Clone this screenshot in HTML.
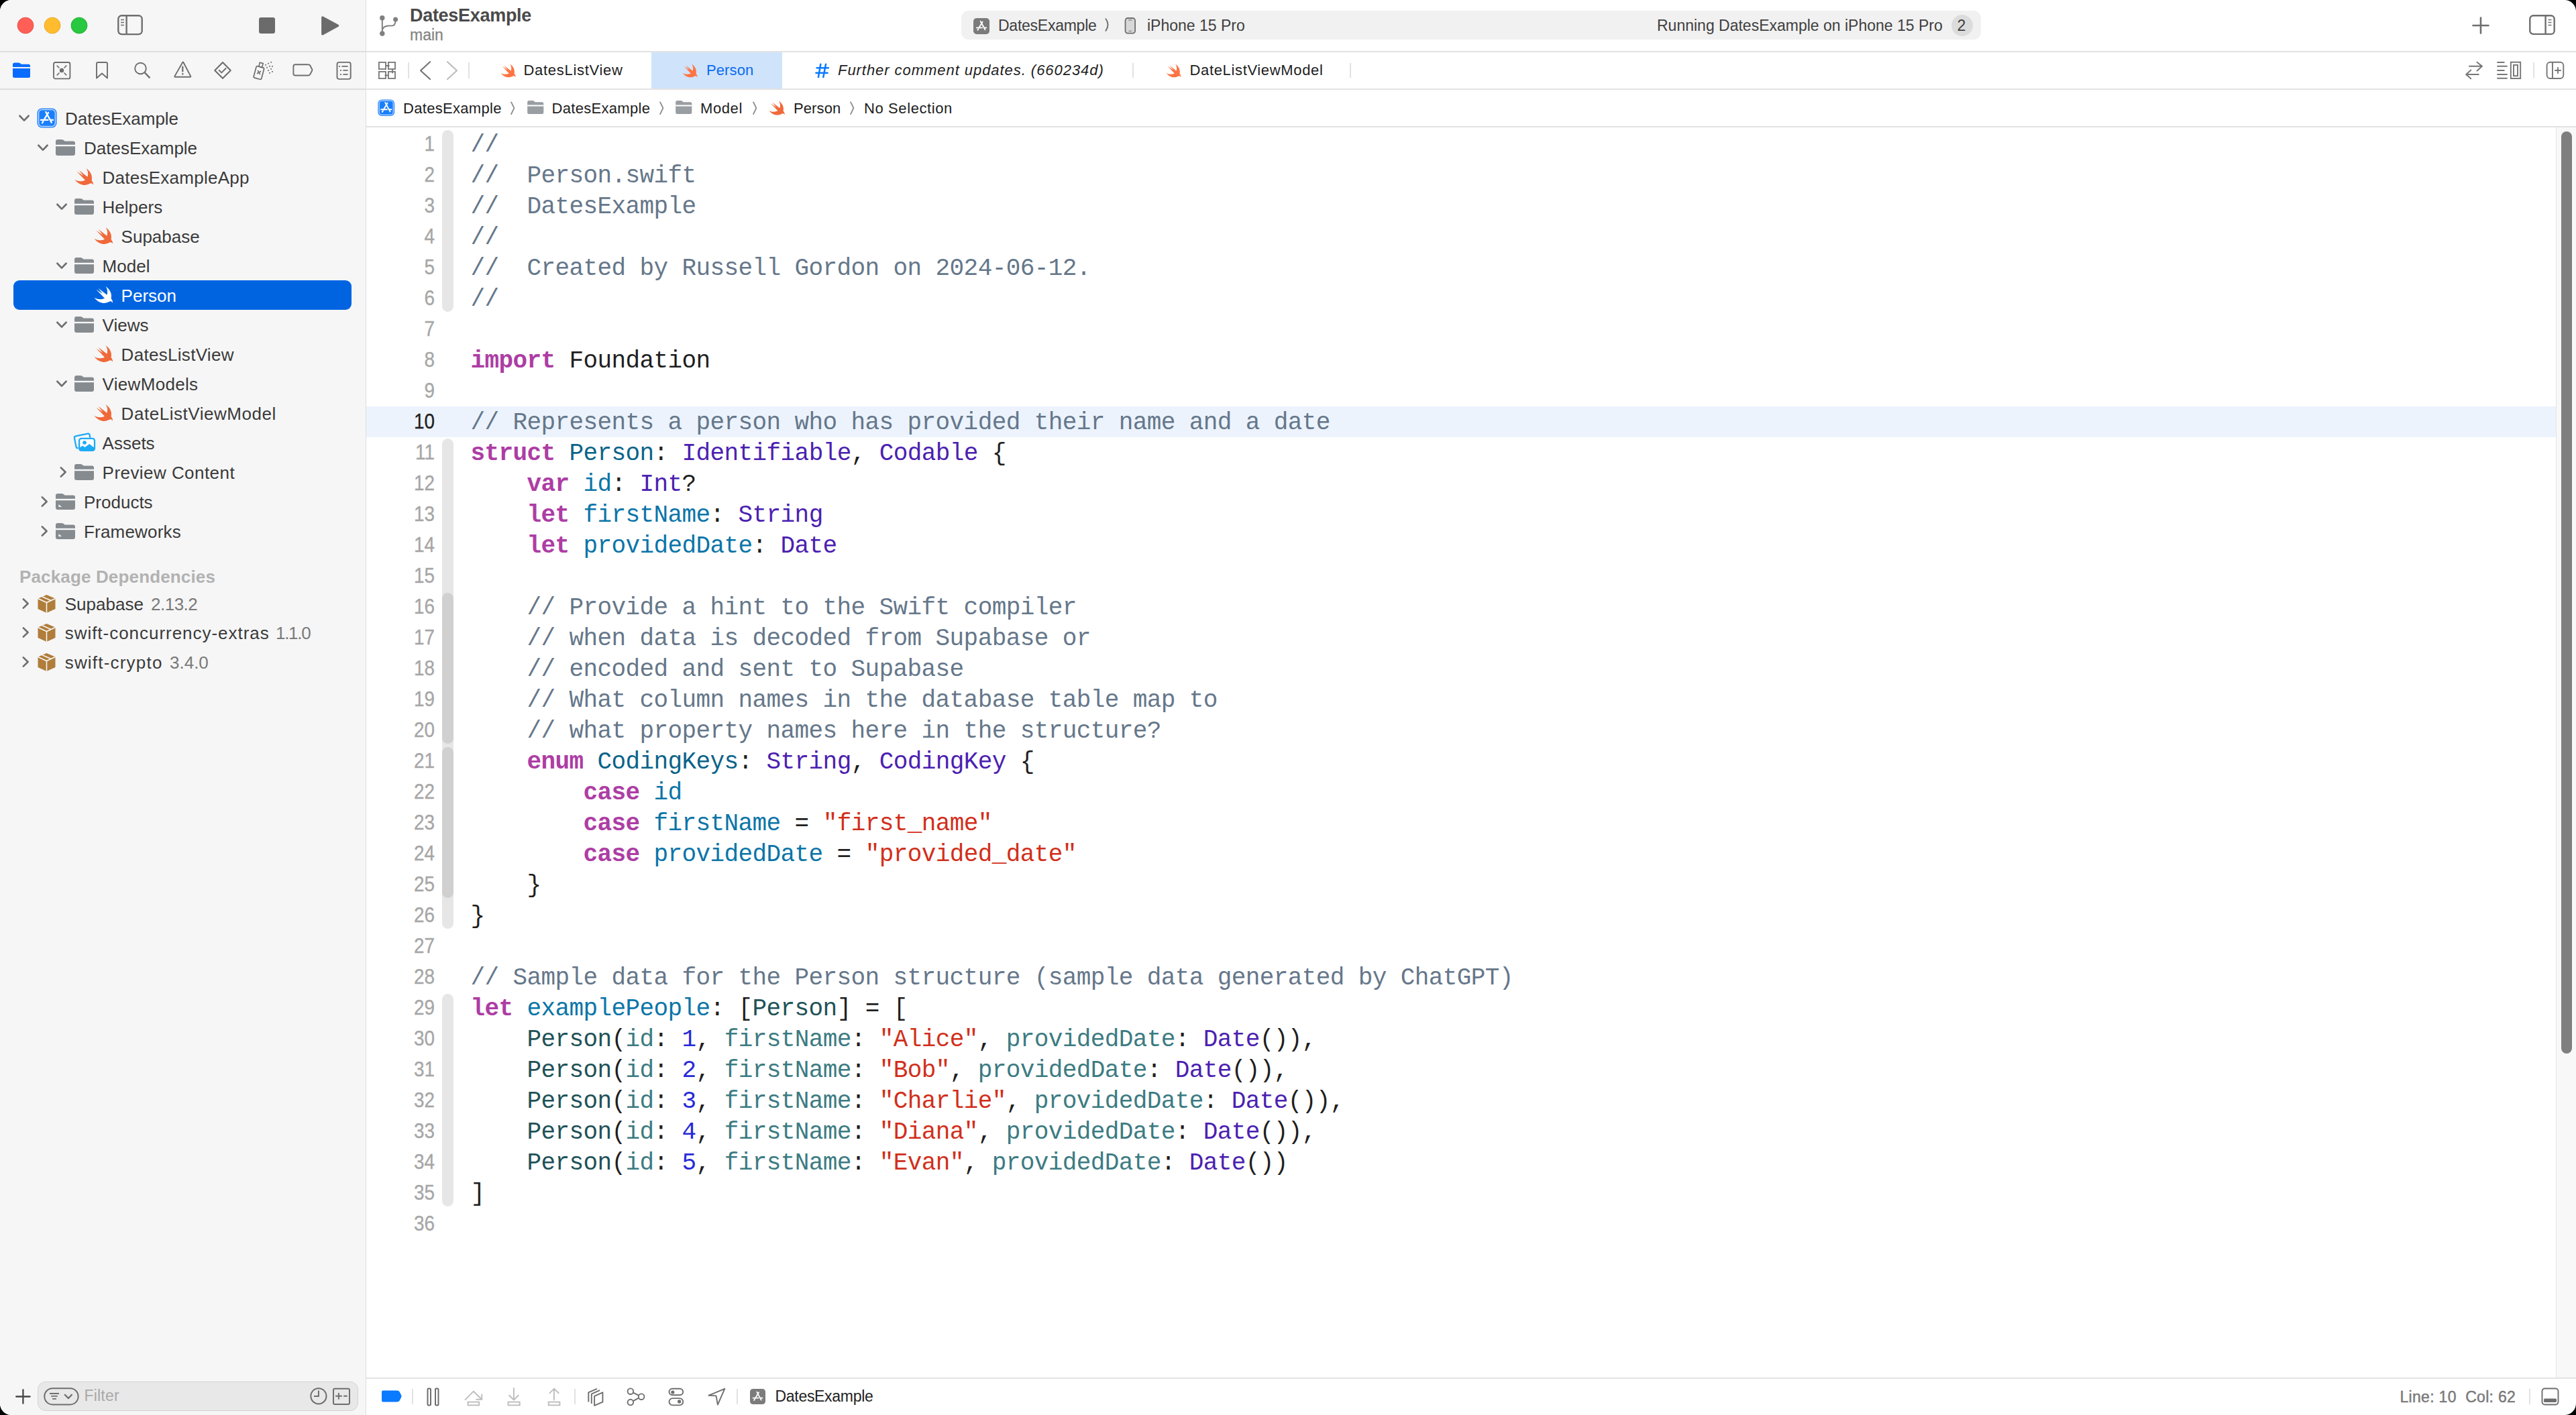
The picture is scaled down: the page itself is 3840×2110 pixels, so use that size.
<!DOCTYPE html><html><head><meta charset="utf-8"><style>
html,body{margin:0;padding:0;width:3840px;height:2110px;overflow:hidden;background:#000}
.t{position:absolute;white-space:pre}
#win{position:absolute;left:0;top:0;width:3840px;height:2110px;border-radius:17px;overflow:hidden;background:#fff}
svg{overflow:visible}
.cl{height:46px}
</style></head><body><div id="win">
<div style="position:absolute;left:0px;top:0px;width:545px;height:2110px;background:#f6f6f6"></div>
<div style="position:absolute;left:545px;top:0px;width:1px;height:2110px;background:#dedede"></div>
<div style="position:absolute;left:0px;top:76px;width:545px;height:2px;background:#dedede"></div>
<div style="position:absolute;left:0px;top:132px;width:545px;height:1.5px;background:#dedede"></div>
<svg style="position:absolute;left:25px;top:25px" width="26" height="26" viewBox="0 0 26 26"><circle cx="13" cy="13" r="12" fill="#ff5f57" stroke="#e24b41" stroke-width="0.8"/></svg>
<svg style="position:absolute;left:64.8px;top:25px" width="26" height="26" viewBox="0 0 26 26"><circle cx="13" cy="13" r="12" fill="#febc2e" stroke="#e1a325" stroke-width="0.8"/></svg>
<svg style="position:absolute;left:105px;top:25px" width="26" height="26" viewBox="0 0 26 26"><circle cx="13" cy="13" r="12" fill="#28c840" stroke="#1daa2c" stroke-width="0.8"/></svg>
<svg style="position:absolute;left:175px;top:22px" width="40" height="31" viewBox="0 0 40 31"><rect x="1.3" y="1.3" width="35.4" height="27.8" rx="5" fill="none" stroke="#6e6e6e" stroke-width="2.4"/><path d="M13.6 1.5 L13.6 29" stroke="#6e6e6e" stroke-width="2.4"/><path d="M5 7.5 H10 M5 11.5 H10 M5 15.5 H10" stroke="#6e6e6e" stroke-width="1.6"/></svg>
<div style="position:absolute;left:386px;top:26px;width:24px;height:24px;background:#6b6b6b;border-radius:3px"></div>
<svg style="position:absolute;left:478px;top:23px" width="30" height="31" viewBox="0 0 30 31"><path d="M2.8 3 L25.6 15.2 L2.8 27.8 Z" fill="#6b6b6b" stroke="#6b6b6b" stroke-width="3.4" stroke-linejoin="round"/></svg>
<svg style="position:absolute;left:19px;top:93px" width="27" height="24" viewBox="0 0 27 24"><path d="M0 3 Q0 0.5 3 0.5 L8.5 0.5 Q10.5 0.5 12 2 L12.8 2.8 L23.5 2.8 Q26 2.8 26 5.3 L26 20.5 Q26 23 23.5 23 L3 23 Q0 23 0 20.5 Z" fill="#0a6cff"/><rect x="0" y="7" width="26" height="2" fill="#f6f6f6"/></svg>
<svg style="position:absolute;left:79px;top:92px" width="27" height="27" viewBox="0 0 27 27"><rect x="1" y="1" width="24.4" height="24.4" rx="2.5" fill="none" stroke="#6e6e6e" stroke-width="1.9"/><circle cx="13" cy="13" r="3.2" fill="#6e6e6e"/><path d="M6.2 6.2 L9 9 M19.8 6.2 L17 9 M6.2 19.8 L9 17 M19.8 19.8 L17 17" stroke="#6e6e6e" stroke-width="1.7" stroke-linecap="round"/></svg>
<svg style="position:absolute;left:142px;top:92px" width="20" height="27" viewBox="0 0 20 27"><path d="M2 24.5 L2 3 Q2 1 4 1 L16 1 Q18 1 18 3 L18 24.5 L10 17.5 Z" fill="none" stroke="#6e6e6e" stroke-width="1.9" stroke-linejoin="round"/></svg>
<svg style="position:absolute;left:198px;top:91px" width="28" height="28" viewBox="0 0 28 28"><circle cx="11.5" cy="11" r="8.3" fill="none" stroke="#6e6e6e" stroke-width="1.9"/><path d="M17.5 17 L24.8 24.6" stroke="#6e6e6e" stroke-width="2.4" stroke-linecap="round"/></svg>
<svg style="position:absolute;left:259px;top:91px" width="27" height="27" viewBox="0 0 27 27"><path d="M13.2 2 Q13.8 1 14.4 2 L25.2 22.6 Q25.6 23.8 24.4 23.8 L2.2 23.8 Q1 23.8 1.4 22.6 Z" fill="none" stroke="#6e6e6e" stroke-width="1.9" stroke-linejoin="round"/><path d="M13.3 8.5 L13.3 15.5" stroke="#6e6e6e" stroke-width="2.2" stroke-linecap="round"/><circle cx="13.3" cy="19.3" r="1.3" fill="#6e6e6e"/></svg>
<svg style="position:absolute;left:318px;top:91px" width="28" height="28" viewBox="0 0 28 28"><path d="M14 2 L25.8 13.9 L14 25.8 L2.2 13.9 Z" fill="none" stroke="#6e6e6e" stroke-width="2.1" stroke-linejoin="round"/><path d="M8.6 13.8 L12.3 17.4 L18.6 11" fill="none" stroke="#6e6e6e" stroke-width="1.9" stroke-linecap="round" stroke-linejoin="round"/></svg>
<svg style="position:absolute;left:377px;top:91px" width="32" height="29" viewBox="0 0 32 29"><g transform="rotate(15 9 17)"><rect x="3" y="8.5" width="12" height="18" rx="2" fill="none" stroke="#6e6e6e" stroke-width="1.7"/><rect x="6.5" y="2.5" width="5" height="6" fill="none" stroke="#6e6e6e" stroke-width="1.6"/><path d="M6.5 14.5 L11.5 19.5 M11.5 14.5 L6.5 19.5" stroke="#6e6e6e" stroke-width="1.6"/></g><rect x="18.200000000000003" y="4.8999999999999995" width="1.8" height="1.8" fill="#6e6e6e"/><rect x="22.1" y="2.8000000000000003" width="1.8" height="1.8" fill="#6e6e6e"/><rect x="26.200000000000003" y="0.9" width="1.8" height="1.8" fill="#6e6e6e"/><rect x="20.1" y="8.799999999999999" width="1.8" height="1.8" fill="#6e6e6e"/><rect x="24.200000000000003" y="6.8999999999999995" width="1.8" height="1.8" fill="#6e6e6e"/><rect x="28.1" y="7.0" width="1.8" height="1.8" fill="#6e6e6e"/><rect x="26.200000000000003" y="10.9" width="1.8" height="1.8" fill="#6e6e6e"/><rect x="22.1" y="13.0" width="1.8" height="1.8" fill="#6e6e6e"/><rect x="28.1" y="14.9" width="1.8" height="1.8" fill="#6e6e6e"/><rect x="24.200000000000003" y="16.900000000000002" width="1.8" height="1.8" fill="#6e6e6e"/></svg>
<svg style="position:absolute;left:436px;top:95px" width="32" height="20" viewBox="0 0 32 20"><path d="M4 1.2 L23.5 1.2 Q25.3 1.2 26.2 2.6 L29.2 8.4 Q29.8 9.3 29.2 10.2 L26.2 16 Q25.3 17.5 23.5 17.5 L4 17.5 Q1.4 17.5 1.4 15 L1.4 3.8 Q1.4 1.2 4 1.2 Z" fill="none" stroke="#6e6e6e" stroke-width="1.9"/></svg>
<svg style="position:absolute;left:501px;top:91px" width="24" height="28" viewBox="0 0 24 28"><rect x="1.5" y="1.9" width="20.2" height="25" rx="2.8" fill="none" stroke="#6e6e6e" stroke-width="1.9"/><path d="M8.4 7.9 H17.6 M10.4 13.9 H17.6 M10.4 19.9 H17.6" stroke="#6e6e6e" stroke-width="1.9"/><rect x="4" y="7" width="1.9" height="1.9" fill="#6e6e6e"/><rect x="6" y="13" width="1.9" height="1.9" fill="#6e6e6e"/><rect x="6" y="19" width="1.9" height="1.9" fill="#6e6e6e"/></svg>
<div style="position:absolute;left:20px;top:418px;width:504px;height:44px;background:#0064e1;border-radius:9px"></div>
<svg style="position:absolute;left:27px;top:171px" width="18" height="12" viewBox="0 0 18 12"><path d="M2.4 1.8 L9 8.6 L15.6 1.8" fill="none" stroke="#6f6f6f" stroke-width="2.7" stroke-linecap="round" stroke-linejoin="round"/></svg>
<svg style="position:absolute;left:54.5px;top:161px" width="30" height="30" viewBox="0 0 30 30"><rect x="0.5" y="0.5" width="29" height="29" rx="7" fill="#1a7ffc"/><rect x="2.6" y="2.6" width="24.8" height="24.8" rx="5" fill="none" stroke="#bcd8fe" stroke-width="1.5"/><g fill="none" stroke="#fff" stroke-width="2.3" stroke-linecap="round"><path d="M17.1 6.9 L10.3 18.1"/><path d="M13.3 6.0 L21.8 21.6"/><path d="M5.9 17.9 H16.4 M20.3 17.9 H24.1"/><path d="M9.3 20.2 L8.0 22.2"/></g></svg>
<div class="t" style="left:97.0px;top:164.0px;font-size:26px;line-height:26px;color:#3a3a3a;font-weight:normal;font-style:normal;font-family:'Liberation Sans', sans-serif;letter-spacing:0px;">DatesExample</div>
<svg style="position:absolute;left:55px;top:215px" width="18" height="12" viewBox="0 0 18 12"><path d="M2.4 1.8 L9 8.6 L15.6 1.8" fill="none" stroke="#6f6f6f" stroke-width="2.7" stroke-linecap="round" stroke-linejoin="round"/></svg>
<svg style="position:absolute;left:83.0px;top:208px" width="29" height="24" viewBox="0 0 29 24"><path d="M0 3 Q0 0 3 0 L9 0 Q11 0 12.5 1.6 L13.5 2.6 L26 2.6 Q29 2.6 29 5.6 L29 21 Q29 24 26 24 L3 24 Q0 24 0 21 Z" fill="#868b90"/><rect x="0" y="7.8" width="29" height="2.4" fill="#f6f6f6"/></svg>
<div class="t" style="left:125.0px;top:208.0px;font-size:26px;line-height:26px;color:#3a3a3a;font-weight:normal;font-style:normal;font-family:'Liberation Sans', sans-serif;letter-spacing:0px;">DatesExample</div>
<svg style="position:absolute;left:111.0px;top:251px" width="29" height="25" viewBox="0 0 29 25"><path d="M0.42 16.5 C4.5 19.6 10 20.2 15.97 17.67 L3.25 4.38 L13.15 11.17 L6.64 2.69 L19.37 12.86 C20.9 8.5 20.2 3.8 17.67 0.14 C23.2 3.6 27.4 10.5 25.59 17.95 C27 19.8 28.3 22.2 28.13 24.46 C26.6 22.6 25.1 22.0 23.6 22.5 C20 24.3 17 25.2 13.7 24.9 C8.6 24.5 3.6 21.2 0.42 16.5 Z" fill="#f0693a"/></svg>
<div class="t" style="left:152.6px;top:252.0px;font-size:26px;line-height:26px;color:#3a3a3a;font-weight:normal;font-style:normal;font-family:'Liberation Sans', sans-serif;letter-spacing:0.25px;">DatesExampleApp</div>
<svg style="position:absolute;left:83px;top:303px" width="18" height="12" viewBox="0 0 18 12"><path d="M2.4 1.8 L9 8.6 L15.6 1.8" fill="none" stroke="#6f6f6f" stroke-width="2.7" stroke-linecap="round" stroke-linejoin="round"/></svg>
<svg style="position:absolute;left:111.3px;top:296px" width="29" height="24" viewBox="0 0 29 24"><path d="M0 3 Q0 0 3 0 L9 0 Q11 0 12.5 1.6 L13.5 2.6 L26 2.6 Q29 2.6 29 5.6 L29 21 Q29 24 26 24 L3 24 Q0 24 0 21 Z" fill="#868b90"/><rect x="0" y="7.8" width="29" height="2.4" fill="#f6f6f6"/></svg>
<div class="t" style="left:152.6px;top:296.0px;font-size:26px;line-height:26px;color:#3a3a3a;font-weight:normal;font-style:normal;font-family:'Liberation Sans', sans-serif;letter-spacing:0px;">Helpers</div>
<svg style="position:absolute;left:139.7px;top:339px" width="29" height="25" viewBox="0 0 29 25"><path d="M0.42 16.5 C4.5 19.6 10 20.2 15.97 17.67 L3.25 4.38 L13.15 11.17 L6.64 2.69 L19.37 12.86 C20.9 8.5 20.2 3.8 17.67 0.14 C23.2 3.6 27.4 10.5 25.59 17.95 C27 19.8 28.3 22.2 28.13 24.46 C26.6 22.6 25.1 22.0 23.6 22.5 C20 24.3 17 25.2 13.7 24.9 C8.6 24.5 3.6 21.2 0.42 16.5 Z" fill="#f0693a"/></svg>
<div class="t" style="left:180.6px;top:340.0px;font-size:26px;line-height:26px;color:#3a3a3a;font-weight:normal;font-style:normal;font-family:'Liberation Sans', sans-serif;letter-spacing:0px;">Supabase</div>
<svg style="position:absolute;left:83px;top:391px" width="18" height="12" viewBox="0 0 18 12"><path d="M2.4 1.8 L9 8.6 L15.6 1.8" fill="none" stroke="#6f6f6f" stroke-width="2.7" stroke-linecap="round" stroke-linejoin="round"/></svg>
<svg style="position:absolute;left:111.3px;top:384px" width="29" height="24" viewBox="0 0 29 24"><path d="M0 3 Q0 0 3 0 L9 0 Q11 0 12.5 1.6 L13.5 2.6 L26 2.6 Q29 2.6 29 5.6 L29 21 Q29 24 26 24 L3 24 Q0 24 0 21 Z" fill="#868b90"/><rect x="0" y="7.8" width="29" height="2.4" fill="#f6f6f6"/></svg>
<div class="t" style="left:152.6px;top:384.0px;font-size:26px;line-height:26px;color:#3a3a3a;font-weight:normal;font-style:normal;font-family:'Liberation Sans', sans-serif;letter-spacing:0px;">Model</div>
<svg style="position:absolute;left:139.7px;top:427px" width="29" height="25" viewBox="0 0 29 25"><path d="M0.42 16.5 C4.5 19.6 10 20.2 15.97 17.67 L3.25 4.38 L13.15 11.17 L6.64 2.69 L19.37 12.86 C20.9 8.5 20.2 3.8 17.67 0.14 C23.2 3.6 27.4 10.5 25.59 17.95 C27 19.8 28.3 22.2 28.13 24.46 C26.6 22.6 25.1 22.0 23.6 22.5 C20 24.3 17 25.2 13.7 24.9 C8.6 24.5 3.6 21.2 0.42 16.5 Z" fill="#ffffff"/></svg>
<div class="t" style="left:180.6px;top:428.0px;font-size:26px;line-height:26px;color:#ffffff;font-weight:normal;font-style:normal;font-family:'Liberation Sans', sans-serif;letter-spacing:0px;">Person</div>
<svg style="position:absolute;left:83px;top:479px" width="18" height="12" viewBox="0 0 18 12"><path d="M2.4 1.8 L9 8.6 L15.6 1.8" fill="none" stroke="#6f6f6f" stroke-width="2.7" stroke-linecap="round" stroke-linejoin="round"/></svg>
<svg style="position:absolute;left:111.3px;top:472px" width="29" height="24" viewBox="0 0 29 24"><path d="M0 3 Q0 0 3 0 L9 0 Q11 0 12.5 1.6 L13.5 2.6 L26 2.6 Q29 2.6 29 5.6 L29 21 Q29 24 26 24 L3 24 Q0 24 0 21 Z" fill="#868b90"/><rect x="0" y="7.8" width="29" height="2.4" fill="#f6f6f6"/></svg>
<div class="t" style="left:152.6px;top:472.0px;font-size:26px;line-height:26px;color:#3a3a3a;font-weight:normal;font-style:normal;font-family:'Liberation Sans', sans-serif;letter-spacing:0px;">Views</div>
<svg style="position:absolute;left:139.7px;top:515px" width="29" height="25" viewBox="0 0 29 25"><path d="M0.42 16.5 C4.5 19.6 10 20.2 15.97 17.67 L3.25 4.38 L13.15 11.17 L6.64 2.69 L19.37 12.86 C20.9 8.5 20.2 3.8 17.67 0.14 C23.2 3.6 27.4 10.5 25.59 17.95 C27 19.8 28.3 22.2 28.13 24.46 C26.6 22.6 25.1 22.0 23.6 22.5 C20 24.3 17 25.2 13.7 24.9 C8.6 24.5 3.6 21.2 0.42 16.5 Z" fill="#f0693a"/></svg>
<div class="t" style="left:180.6px;top:516.0px;font-size:26px;line-height:26px;color:#3a3a3a;font-weight:normal;font-style:normal;font-family:'Liberation Sans', sans-serif;letter-spacing:0.3px;">DatesListView</div>
<svg style="position:absolute;left:83px;top:567px" width="18" height="12" viewBox="0 0 18 12"><path d="M2.4 1.8 L9 8.6 L15.6 1.8" fill="none" stroke="#6f6f6f" stroke-width="2.7" stroke-linecap="round" stroke-linejoin="round"/></svg>
<svg style="position:absolute;left:111.3px;top:560px" width="29" height="24" viewBox="0 0 29 24"><path d="M0 3 Q0 0 3 0 L9 0 Q11 0 12.5 1.6 L13.5 2.6 L26 2.6 Q29 2.6 29 5.6 L29 21 Q29 24 26 24 L3 24 Q0 24 0 21 Z" fill="#868b90"/><rect x="0" y="7.8" width="29" height="2.4" fill="#f6f6f6"/></svg>
<div class="t" style="left:152.6px;top:560.0px;font-size:26px;line-height:26px;color:#3a3a3a;font-weight:normal;font-style:normal;font-family:'Liberation Sans', sans-serif;letter-spacing:0.3px;">ViewModels</div>
<svg style="position:absolute;left:139.7px;top:603px" width="29" height="25" viewBox="0 0 29 25"><path d="M0.42 16.5 C4.5 19.6 10 20.2 15.97 17.67 L3.25 4.38 L13.15 11.17 L6.64 2.69 L19.37 12.86 C20.9 8.5 20.2 3.8 17.67 0.14 C23.2 3.6 27.4 10.5 25.59 17.95 C27 19.8 28.3 22.2 28.13 24.46 C26.6 22.6 25.1 22.0 23.6 22.5 C20 24.3 17 25.2 13.7 24.9 C8.6 24.5 3.6 21.2 0.42 16.5 Z" fill="#f0693a"/></svg>
<div class="t" style="left:180.6px;top:604.0px;font-size:26px;line-height:26px;color:#3a3a3a;font-weight:normal;font-style:normal;font-family:'Liberation Sans', sans-serif;letter-spacing:0.54px;">DateListViewModel</div>
<svg style="position:absolute;left:100px;top:640px" width="50" height="40" viewBox="0 0 50 40"><path d="M16.5 27.8 L15.8 28 Q13.9 28.2 13.5 26.2 L10.9 12.9 Q10.5 10.7 12.7 10.3 L31 6.6 Q33.2 6.3 33.6 8.5 L34.3 12.6" fill="none" stroke="#1eabf6" stroke-width="2.3" stroke-linejoin="round"/><rect x="18.1" y="13.8" width="22.9" height="18" rx="3.2" fill="#fff" stroke="#1eabf6" stroke-width="2.3"/><path d="M19 27.3 L23.3 24.4 L26.5 26.9 L33.2 22.1 L40 27.3 L40 31 L19 31 Z" fill="#1eabf6"/><circle cx="26" cy="20" r="2.8" fill="#1eabf6"/></svg>
<div class="t" style="left:152.6px;top:648.0px;font-size:26px;line-height:26px;color:#3a3a3a;font-weight:normal;font-style:normal;font-family:'Liberation Sans', sans-serif;letter-spacing:0px;">Assets</div>
<svg style="position:absolute;left:89px;top:695px" width="12" height="18" viewBox="0 0 12 18"><path d="M1.8 2.4 L8.6 9 L1.8 15.6" fill="none" stroke="#6f6f6f" stroke-width="2.7" stroke-linecap="round" stroke-linejoin="round"/></svg>
<svg style="position:absolute;left:111.3px;top:692px" width="29" height="24" viewBox="0 0 29 24"><path d="M0 3 Q0 0 3 0 L9 0 Q11 0 12.5 1.6 L13.5 2.6 L26 2.6 Q29 2.6 29 5.6 L29 21 Q29 24 26 24 L3 24 Q0 24 0 21 Z" fill="#868b90"/><rect x="0" y="7.8" width="29" height="2.4" fill="#f6f6f6"/></svg>
<div class="t" style="left:152.6px;top:692.0px;font-size:26px;line-height:26px;color:#3a3a3a;font-weight:normal;font-style:normal;font-family:'Liberation Sans', sans-serif;letter-spacing:0.45px;">Preview Content</div>
<svg style="position:absolute;left:61px;top:739px" width="12" height="18" viewBox="0 0 12 18"><path d="M1.8 2.4 L8.6 9 L1.8 15.6" fill="none" stroke="#6f6f6f" stroke-width="2.7" stroke-linecap="round" stroke-linejoin="round"/></svg>
<svg style="position:absolute;left:83.0px;top:736px" width="29" height="24" viewBox="0 0 29 24"><path d="M0 3 Q0 0 3 0 L9 0 Q11 0 12.5 1.6 L13.5 2.6 L26 2.6 Q29 2.6 29 5.6 L29 21 Q29 24 26 24 L3 24 Q0 24 0 21 Z" fill="#868b90"/><rect x="0" y="7.8" width="29" height="2.4" fill="#f6f6f6"/><path d="M4.5 16 L4.5 20 L9 20 Z" fill="#f6f6f6"/></svg>
<div class="t" style="left:125.0px;top:736.0px;font-size:26px;line-height:26px;color:#3a3a3a;font-weight:normal;font-style:normal;font-family:'Liberation Sans', sans-serif;letter-spacing:0px;">Products</div>
<svg style="position:absolute;left:61px;top:783px" width="12" height="18" viewBox="0 0 12 18"><path d="M1.8 2.4 L8.6 9 L1.8 15.6" fill="none" stroke="#6f6f6f" stroke-width="2.7" stroke-linecap="round" stroke-linejoin="round"/></svg>
<svg style="position:absolute;left:83.0px;top:780px" width="29" height="24" viewBox="0 0 29 24"><path d="M0 3 Q0 0 3 0 L9 0 Q11 0 12.5 1.6 L13.5 2.6 L26 2.6 Q29 2.6 29 5.6 L29 21 Q29 24 26 24 L3 24 Q0 24 0 21 Z" fill="#868b90"/><rect x="0" y="7.8" width="29" height="2.4" fill="#f6f6f6"/><path d="M4.5 16 L4.5 20 L9 20 Z" fill="#f6f6f6"/></svg>
<div class="t" style="left:125.0px;top:780.0px;font-size:26px;line-height:26px;color:#3a3a3a;font-weight:normal;font-style:normal;font-family:'Liberation Sans', sans-serif;letter-spacing:0.2px;">Frameworks</div>
<div class="t" style="left:29.0px;top:846.7px;font-size:26px;line-height:26px;color:#b2b2b2;font-weight:bold;font-style:normal;font-family:'Liberation Sans', sans-serif;letter-spacing:0.15px;">Package Dependencies</div>
<svg style="position:absolute;left:33px;top:891.0px" width="12" height="18" viewBox="0 0 12 18"><path d="M1.8 2.4 L8.6 9 L1.8 15.6" fill="none" stroke="#6f6f6f" stroke-width="2.7" stroke-linecap="round" stroke-linejoin="round"/></svg>
<svg style="position:absolute;left:56px;top:886.0px" width="28" height="29" viewBox="0 0 28 29"><path d="M13.5 1 L26.5 6.5 L26.5 22 L13.5 28 L0.5 22 L0.5 6.5 Z" fill="#b07d3a"/><path d="M0.5 6.5 L13.5 12.5 L26.5 6.5 M13.5 12.5 L13.5 28" fill="none" stroke="#f6f6f6" stroke-width="1.6"/><path d="M6.5 3.5 L20 9.5" stroke="#f6f6f6" stroke-width="1.6"/></svg>
<div class="t" style="left:96.7px;top:888.0px;font-size:26px;line-height:26px;color:#3a3a3a;font-weight:normal;font-style:normal;font-family:'Liberation Sans', sans-serif;letter-spacing:0.03px;">Supabase</div>
<div class="t" style="left:225.0px;top:888.0px;font-size:26px;line-height:26px;color:#7a7a7a;font-weight:normal;font-style:normal;font-family:'Liberation Sans', sans-serif;letter-spacing:-0.5px;">2.13.2</div>
<svg style="position:absolute;left:33px;top:934.4px" width="12" height="18" viewBox="0 0 12 18"><path d="M1.8 2.4 L8.6 9 L1.8 15.6" fill="none" stroke="#6f6f6f" stroke-width="2.7" stroke-linecap="round" stroke-linejoin="round"/></svg>
<svg style="position:absolute;left:56px;top:929.4px" width="28" height="29" viewBox="0 0 28 29"><path d="M13.5 1 L26.5 6.5 L26.5 22 L13.5 28 L0.5 22 L0.5 6.5 Z" fill="#b07d3a"/><path d="M0.5 6.5 L13.5 12.5 L26.5 6.5 M13.5 12.5 L13.5 28" fill="none" stroke="#f6f6f6" stroke-width="1.6"/><path d="M6.5 3.5 L20 9.5" stroke="#f6f6f6" stroke-width="1.6"/></svg>
<div class="t" style="left:96.7px;top:931.4px;font-size:26px;line-height:26px;color:#3a3a3a;font-weight:normal;font-style:normal;font-family:'Liberation Sans', sans-serif;letter-spacing:0.97px;">swift-concurrency-extras</div>
<div class="t" style="left:411.0px;top:931.4px;font-size:26px;line-height:26px;color:#7a7a7a;font-weight:normal;font-style:normal;font-family:'Liberation Sans', sans-serif;letter-spacing:-1.3px;">1.1.0</div>
<svg style="position:absolute;left:33px;top:977.8px" width="12" height="18" viewBox="0 0 12 18"><path d="M1.8 2.4 L8.6 9 L1.8 15.6" fill="none" stroke="#6f6f6f" stroke-width="2.7" stroke-linecap="round" stroke-linejoin="round"/></svg>
<svg style="position:absolute;left:56px;top:972.8px" width="28" height="29" viewBox="0 0 28 29"><path d="M13.5 1 L26.5 6.5 L26.5 22 L13.5 28 L0.5 22 L0.5 6.5 Z" fill="#b07d3a"/><path d="M0.5 6.5 L13.5 12.5 L26.5 6.5 M13.5 12.5 L13.5 28" fill="none" stroke="#f6f6f6" stroke-width="1.6"/><path d="M6.5 3.5 L20 9.5" stroke="#f6f6f6" stroke-width="1.6"/></svg>
<div class="t" style="left:96.7px;top:974.8px;font-size:26px;line-height:26px;color:#3a3a3a;font-weight:normal;font-style:normal;font-family:'Liberation Sans', sans-serif;letter-spacing:1.2px;">swift-crypto</div>
<div class="t" style="left:253.0px;top:974.8px;font-size:26px;line-height:26px;color:#7a7a7a;font-weight:normal;font-style:normal;font-family:'Liberation Sans', sans-serif;letter-spacing:0px;">3.4.0</div>
<svg style="position:absolute;left:22px;top:2070px" width="26" height="26" viewBox="0 0 26 26"><path d="M12.4 2.3 V22.7 M2.2 12.5 H22.6" stroke="#454545" stroke-width="2.3" stroke-linecap="round"/></svg>
<div style="position:absolute;left:56.3px;top:2060.3px;width:477.5px;height:43.6px;background:#e8e8e8;border:1px solid #d3d3d3;border-radius:12px;box-sizing:border-box"></div>
<svg style="position:absolute;left:64px;top:2068px" width="54" height="28" viewBox="0 0 54 28"><rect x="2.3" y="2.3" width="50.3" height="24.1" rx="12" fill="none" stroke="#6e6e6e" stroke-width="2"/><path d="M10 10 H24 M12.2 13.8 H21.8 M14 17.9 H20" stroke="#6e6e6e" stroke-width="1.8"/><path d="M32.7 11.8 L38 17.1 L43 11.8" fill="none" stroke="#6e6e6e" stroke-width="2.2" stroke-linecap="round" stroke-linejoin="round"/></svg>
<div class="t" style="left:125.5px;top:2069.5px;font-size:23px;line-height:23px;color:#a8a8a8;font-weight:normal;font-style:normal;font-family:'Liberation Sans', sans-serif;letter-spacing:0.2px;">Filter</div>
<svg style="position:absolute;left:461px;top:2068px" width="28" height="28" viewBox="0 0 28 28"><circle cx="13.9" cy="13.8" r="11.6" fill="none" stroke="#6e6e6e" stroke-width="2"/><path d="M13.9 5.6 V13.9 H7" fill="none" stroke="#6e6e6e" stroke-width="2"/></svg>
<svg style="position:absolute;left:495px;top:2069px" width="28" height="27" viewBox="0 0 28 27"><rect x="2" y="1.8" width="24" height="23.3" rx="2" fill="none" stroke="#6e6e6e" stroke-width="2"/><path d="M5 12.8 H14.8 M9.9 7.9 V17.7 M17.2 12.8 H22.8" stroke="#6e6e6e" stroke-width="1.9"/></svg>
<div style="position:absolute;left:546px;top:76px;width:3294px;height:2px;background:#e3e3e3"></div>
<div style="position:absolute;left:546px;top:132px;width:3294px;height:1.5px;background:#e3e3e3"></div>
<div style="position:absolute;left:546px;top:188px;width:3294px;height:1.5px;background:#e3e3e3"></div>
<div style="position:absolute;left:546px;top:2054px;width:3294px;height:1.5px;background:#e3e3e3"></div>
<svg style="position:absolute;left:560px;top:18px" width="36" height="40" viewBox="0 0 36 40"><circle cx="9.8" cy="8.7" r="3.7" fill="#808080"/><circle cx="29.6" cy="11.1" r="3.5" fill="#808080"/><circle cx="9.8" cy="32" r="3.7" fill="#808080"/><path d="M9.8 9 V31" stroke="#808080" stroke-width="2"/><path d="M9.8 27 Q11 21.5 18 20.6 L25 20.2 Q29.6 19.8 29.6 12" fill="none" stroke="#808080" stroke-width="2"/></svg>
<div class="t" style="left:611.0px;top:10.1px;font-size:27px;line-height:27px;color:#4a4a4a;font-weight:bold;font-style:normal;font-family:'Liberation Sans', sans-serif;letter-spacing:-0.3px;">DatesExample</div>
<div class="t" style="left:611.0px;top:40.5px;font-size:23px;line-height:23px;color:#858585;font-weight:normal;font-style:normal;font-family:'Liberation Sans', sans-serif;letter-spacing:0px;-webkit-text-stroke:0.3px #858585">main</div>
<div style="position:absolute;left:1433px;top:16.3px;width:1520px;height:43px;background:#f1f1f1;border-radius:11px"></div>
<svg style="position:absolute;left:1451px;top:26.5px" width="24" height="24" viewBox="0 0 30 30"><rect x="0" y="0" width="30" height="30" rx="6" fill="#7b7b7b"/><g fill="none" stroke="#fff" stroke-width="2.3" stroke-linecap="round"><path d="M17.1 6.9 L10.3 18.1"/><path d="M13.3 6.0 L21.8 21.6"/><path d="M5.9 17.9 H16.4 M20.3 17.9 H24.1"/><path d="M9.3 20.2 L8.0 22.2"/></g></svg>
<div class="t" style="left:1488.0px;top:26.5px;font-size:23px;line-height:23px;color:#404040;font-weight:normal;font-style:normal;font-family:'Liberation Sans', sans-serif;letter-spacing:-0.25px;">DatesExample</div>
<svg style="position:absolute;left:1646px;top:26px" width="10" height="23" viewBox="0 0 10 23"><path d="M2 1.5 Q9 10.5 2 20.5" fill="none" stroke="#6e6e6e" stroke-width="1.9"/></svg>
<svg style="position:absolute;left:1676px;top:26px" width="18" height="25" viewBox="0 0 18 25"><rect x="1.5" y="1" width="14.6" height="22.6" rx="3.5" fill="#d8d8d8" stroke="#6e6e6e" stroke-width="1.8"/><path d="M6 4 H11.5 M6.5 20.2 H11" stroke="#6e6e6e" stroke-width="1.1"/></svg>
<div class="t" style="left:1710.0px;top:26.5px;font-size:23px;line-height:23px;color:#404040;font-weight:normal;font-style:normal;font-family:'Liberation Sans', sans-serif;letter-spacing:0px;">iPhone 15 Pro</div>
<div class="t" style="left:2470.0px;top:26.5px;font-size:23px;line-height:23px;color:#404040;font-weight:normal;font-style:normal;font-family:'Liberation Sans', sans-serif;letter-spacing:0px;">Running DatesExample on iPhone 15 Pro</div>
<svg style="position:absolute;left:2909px;top:21.5px" width="32" height="32" viewBox="0 0 32 32"><circle cx="16" cy="16" r="16" fill="#dcdcdc"/></svg>
<div class="t" style="left:2917.5px;top:26.5px;font-size:23px;line-height:23px;color:#404040;font-weight:normal;font-style:normal;font-family:'Liberation Sans', sans-serif;letter-spacing:0px;">2</div>
<svg style="position:absolute;left:3685px;top:25px" width="26" height="26" viewBox="0 0 26 26"><path d="M13 1.5 V24.5 M1.5 13 H24.5" stroke="#6e6e6e" stroke-width="2.6" stroke-linecap="round"/></svg>
<svg style="position:absolute;left:3770px;top:22px" width="40" height="31" viewBox="0 0 40 31"><rect x="1.3" y="1.3" width="36.4" height="27.6" rx="5" fill="none" stroke="#6e6e6e" stroke-width="2.4"/><path d="M24.6 1.5 L24.6 29" stroke="#6e6e6e" stroke-width="2.4"/><path d="M28.5 7.5 H33.5 M28.5 11.5 H33.5 M28.5 15.5 H33.5" stroke="#6e6e6e" stroke-width="1.6"/></svg>
<svg style="position:absolute;left:563px;top:91px" width="29" height="29" viewBox="0 0 29 29"><g fill="none" stroke="#767676" stroke-width="1.8"><rect x="1.9" y="1.9" width="10.1" height="10.1"/><rect x="15.9" y="1.9" width="10.1" height="10.1"/><rect x="1.9" y="15.9" width="10.1" height="10.1"/><rect x="15.9" y="15.9" width="10.1" height="10.1"/><path d="M12 7 H17.6 M22 12 V18.3 M16.5 21.3 H10.5"/></g></svg>
<div style="position:absolute;left:608px;top:93px;width:2px;height:24px;background:#e2e2e2"></div>
<svg style="position:absolute;left:624px;top:90px" width="20" height="30" viewBox="0 0 20 30"><path d="M17 2.2 L3 15.2 L17 28" fill="none" stroke="#767676" stroke-width="2.2" stroke-linecap="round" stroke-linejoin="round"/></svg>
<svg style="position:absolute;left:664px;top:90px" width="20" height="30" viewBox="0 0 20 30"><path d="M3 2.2 L17 15.2 L3 28" fill="none" stroke="#bdbdbd" stroke-width="2.2" stroke-linecap="round" stroke-linejoin="round"/></svg>
<div style="position:absolute;left:698px;top:93px;width:2px;height:24px;background:#e2e2e2"></div>
<div style="position:absolute;left:970.5px;top:78px;width:195.5px;height:54px;background:#cfe3fb"></div>
<svg style="position:absolute;left:745.5px;top:95px" width="23.3" height="20.7" viewBox="0 0 29 25"><path d="M0.42 16.5 C4.5 19.6 10 20.2 15.97 17.67 L3.25 4.38 L13.15 11.17 L6.64 2.69 L19.37 12.86 C20.9 8.5 20.2 3.8 17.67 0.14 C23.2 3.6 27.4 10.5 25.59 17.95 C27 19.8 28.3 22.2 28.13 24.46 C26.6 22.6 25.1 22.0 23.6 22.5 C20 24.3 17 25.2 13.7 24.9 C8.6 24.5 3.6 21.2 0.42 16.5 Z" fill="#ff7443"/></svg>
<div class="t" style="left:780.5px;top:94.2px;font-size:22px;line-height:22px;color:#1e1e1e;font-weight:normal;font-style:normal;font-family:'Liberation Sans', sans-serif;letter-spacing:0.7px;">DatesListView</div>
<svg style="position:absolute;left:1017px;top:95px" width="23.3" height="20.7" viewBox="0 0 29 25"><path d="M0.42 16.5 C4.5 19.6 10 20.2 15.97 17.67 L3.25 4.38 L13.15 11.17 L6.64 2.69 L19.37 12.86 C20.9 8.5 20.2 3.8 17.67 0.14 C23.2 3.6 27.4 10.5 25.59 17.95 C27 19.8 28.3 22.2 28.13 24.46 C26.6 22.6 25.1 22.0 23.6 22.5 C20 24.3 17 25.2 13.7 24.9 C8.6 24.5 3.6 21.2 0.42 16.5 Z" fill="#ff7443"/></svg>
<div class="t" style="left:1053.0px;top:94.2px;font-size:22px;line-height:22px;color:#0a6cf0;font-weight:normal;font-style:normal;font-family:'Liberation Sans', sans-serif;letter-spacing:0.1px;">Person</div>
<svg style="position:absolute;left:1210px;top:90px" width="30" height="30" viewBox="0 0 30 30"><g stroke="#0a7aff" stroke-width="2.5" stroke-linecap="round"><path d="M13.3 5.8 L9.9 25 M21 5.8 L17.3 25 M7.6 11.3 H24.8 M6.4 18.7 H23.6"/></g></svg>
<div class="t" style="left:1249.0px;top:94.2px;font-size:22px;line-height:22px;color:#1e1e1e;font-weight:normal;font-style:italic;font-family:'Liberation Sans', sans-serif;letter-spacing:0.95px;">Further comment updates. (660234d)</div>
<div style="position:absolute;left:1688px;top:94px;width:2px;height:22px;background:#e2e2e2"></div>
<svg style="position:absolute;left:1738px;top:95px" width="23.3" height="20.7" viewBox="0 0 29 25"><path d="M0.42 16.5 C4.5 19.6 10 20.2 15.97 17.67 L3.25 4.38 L13.15 11.17 L6.64 2.69 L19.37 12.86 C20.9 8.5 20.2 3.8 17.67 0.14 C23.2 3.6 27.4 10.5 25.59 17.95 C27 19.8 28.3 22.2 28.13 24.46 C26.6 22.6 25.1 22.0 23.6 22.5 C20 24.3 17 25.2 13.7 24.9 C8.6 24.5 3.6 21.2 0.42 16.5 Z" fill="#ff7443"/></svg>
<div class="t" style="left:1773.5px;top:94.2px;font-size:22px;line-height:22px;color:#1e1e1e;font-weight:normal;font-style:normal;font-family:'Liberation Sans', sans-serif;letter-spacing:0.65px;">DateListViewModel</div>
<div style="position:absolute;left:2012px;top:94px;width:2px;height:22px;background:#e2e2e2"></div>
<svg style="position:absolute;left:3670px;top:85px" width="160" height="40" viewBox="0 0 160 40"><g fill="none" stroke="#767676" stroke-width="1.9" stroke-linecap="round" stroke-linejoin="round"><path d="M11 13.8 H30 M22.5 7.7 L30 13.8 L22.5 20.5"/><path d="M6.2 26 H24.8 M13.3 19.5 L6.2 26 L13.3 32.3"/></g><g fill="none" stroke="#767676" stroke-width="1.9"><path d="M52.3 8 H63.5 M52.3 13.8 H67.7 M52.3 20 H63.5 M52.3 26 H67.7 M52.3 31.8 H67.7"/><rect x="72.8" y="7.7" width="14.4" height="24.3"/><rect x="77" y="11.9" width="6" height="16.3"/></g><rect x="126.6" y="7.7" width="24.7" height="24.3" rx="5" fill="none" stroke="#767676" stroke-width="1.9"/><path d="M135 7.7 V32 M138.2 20 H147.8 M143 15.2 V24.8" stroke="#767676" stroke-width="1.9"/></svg>
<div style="position:absolute;left:3776px;top:93px;width:2px;height:23px;background:#e2e2e2"></div>
<svg style="position:absolute;left:563px;top:147.5px" width="25.5" height="25.5" viewBox="0 0 30 30"><rect x="0.5" y="0.5" width="29" height="29" rx="7" fill="#1a7ffc"/><rect x="2.6" y="2.6" width="24.8" height="24.8" rx="5" fill="none" stroke="#bcd8fe" stroke-width="1.5"/><g fill="none" stroke="#fff" stroke-width="2.3" stroke-linecap="round"><path d="M17.1 6.9 L10.3 18.1"/><path d="M13.3 6.0 L21.8 21.6"/><path d="M5.9 17.9 H16.4 M20.3 17.9 H24.1"/><path d="M9.3 20.2 L8.0 22.2"/></g></svg>
<div class="t" style="left:601.0px;top:150.7px;font-size:22px;line-height:22px;color:#1e1e1e;font-weight:normal;font-style:normal;font-family:'Liberation Sans', sans-serif;letter-spacing:0.3px;">DatesExample</div>
<svg style="position:absolute;left:760px;top:150px" width="10" height="23" viewBox="0 0 10 23"><path d="M2.1 2.4 L6.4 11.1 L2.1 20.1" fill="none" stroke="#8a8a8a" stroke-width="1.8" stroke-linecap="round" stroke-linejoin="round"/></svg>
<svg style="position:absolute;left:785.5px;top:150px" width="24.5" height="20" viewBox="0 0 29 24"><path d="M0 3 Q0 0 3 0 L9 0 Q11 0 12.5 1.6 L13.5 2.6 L26 2.6 Q29 2.6 29 5.6 L29 21 Q29 24 26 24 L3 24 Q0 24 0 21 Z" fill="#999ea3"/><rect x="0" y="7.8" width="29" height="2.4" fill="#ffffff"/></svg>
<div class="t" style="left:822.5px;top:150.7px;font-size:22px;line-height:22px;color:#1e1e1e;font-weight:normal;font-style:normal;font-family:'Liberation Sans', sans-serif;letter-spacing:0.3px;">DatesExample</div>
<svg style="position:absolute;left:982px;top:150px" width="10" height="23" viewBox="0 0 10 23"><path d="M2.1 2.4 L6.4 11.1 L2.1 20.1" fill="none" stroke="#8a8a8a" stroke-width="1.8" stroke-linecap="round" stroke-linejoin="round"/></svg>
<svg style="position:absolute;left:1007px;top:150px" width="24.5" height="20" viewBox="0 0 29 24"><path d="M0 3 Q0 0 3 0 L9 0 Q11 0 12.5 1.6 L13.5 2.6 L26 2.6 Q29 2.6 29 5.6 L29 21 Q29 24 26 24 L3 24 Q0 24 0 21 Z" fill="#999ea3"/><rect x="0" y="7.8" width="29" height="2.4" fill="#ffffff"/></svg>
<div class="t" style="left:1044.0px;top:150.7px;font-size:22px;line-height:22px;color:#1e1e1e;font-weight:normal;font-style:normal;font-family:'Liberation Sans', sans-serif;letter-spacing:0.6px;">Model</div>
<svg style="position:absolute;left:1121px;top:150px" width="10" height="23" viewBox="0 0 10 23"><path d="M2.1 2.4 L6.4 11.1 L2.1 20.1" fill="none" stroke="#8a8a8a" stroke-width="1.8" stroke-linecap="round" stroke-linejoin="round"/></svg>
<svg style="position:absolute;left:1145.5px;top:150px" width="24.5" height="22" viewBox="0 0 29 25"><path d="M0.42 16.5 C4.5 19.6 10 20.2 15.97 17.67 L3.25 4.38 L13.15 11.17 L6.64 2.69 L19.37 12.86 C20.9 8.5 20.2 3.8 17.67 0.14 C23.2 3.6 27.4 10.5 25.59 17.95 C27 19.8 28.3 22.2 28.13 24.46 C26.6 22.6 25.1 22.0 23.6 22.5 C20 24.3 17 25.2 13.7 24.9 C8.6 24.5 3.6 21.2 0.42 16.5 Z" fill="#f0693a"/></svg>
<div class="t" style="left:1183.0px;top:150.7px;font-size:22px;line-height:22px;color:#1e1e1e;font-weight:normal;font-style:normal;font-family:'Liberation Sans', sans-serif;letter-spacing:0.1px;">Person</div>
<svg style="position:absolute;left:1266px;top:150px" width="10" height="23" viewBox="0 0 10 23"><path d="M2.1 2.4 L6.4 11.1 L2.1 20.1" fill="none" stroke="#8a8a8a" stroke-width="1.8" stroke-linecap="round" stroke-linejoin="round"/></svg>
<div class="t" style="left:1288.0px;top:150.7px;font-size:22px;line-height:22px;color:#1e1e1e;font-weight:normal;font-style:normal;font-family:'Liberation Sans', sans-serif;letter-spacing:0.6px;">No Selection</div>
<div style="position:absolute;left:546px;top:605.6px;width:3265px;height:46px;background:#ecf3fd"></div>
<div style="position:absolute;left:658.5px;top:194.1px;width:17.5px;height:271.0px;background:#e6e6e6;border-radius:9px"></div>
<div style="position:absolute;left:658.5px;top:654.1px;width:17.5px;height:730.9999999999999px;background:#e6e6e6;border-radius:9px"></div>
<div style="position:absolute;left:658.5px;top:884.1px;width:17.5px;height:224.9999999999999px;background:#d0d0d0;border-radius:9px"></div>
<div style="position:absolute;left:658.5px;top:1114.1px;width:17.5px;height:225.0px;background:#d0d0d0;border-radius:9px"></div>
<div style="position:absolute;left:658.5px;top:1482.1px;width:17.5px;height:317.0px;background:#e6e6e6;border-radius:9px"></div>
<div style="position:absolute;left:701.5px;top:194.2px;font-family:'Liberation Mono', monospace;font-size:36px;line-height:46px;letter-spacing:-0.6px;white-space:pre"><div class="cl"><span style="color:#65778a;">//</span></div><div class="cl"><span style="color:#65778a;">//  Person.swift</span></div><div class="cl"><span style="color:#65778a;">//  DatesExample</span></div><div class="cl"><span style="color:#65778a;">//</span></div><div class="cl"><span style="color:#65778a;">//  Created by Russell Gordon on 2024-06-12.</span></div><div class="cl"><span style="color:#65778a;">//</span></div><div class="cl"></div><div class="cl"><span style="color:#ad3da4;font-weight:bold;">import</span><span style="color:#1f1f1f;"> Foundation</span></div><div class="cl"></div><div class="cl"><span style="color:#65778a;">// Represents a person who has provided their name and a date</span></div><div class="cl"><span style="color:#ad3da4;font-weight:bold;">struct</span><span style="color:#1f1f1f;"> </span><span style="color:#0b6389;">Person</span><span style="color:#1f1f1f;">: </span><span style="color:#4b21b0;">Identifiable</span><span style="color:#1f1f1f;">, </span><span style="color:#4b21b0;">Codable</span><span style="color:#1f1f1f;"> {</span></div><div class="cl"><span style="color:#1f1f1f;">    </span><span style="color:#ad3da4;font-weight:bold;">var</span><span style="color:#1f1f1f;"> </span><span style="color:#0b75a8;">id</span><span style="color:#1f1f1f;">: </span><span style="color:#4b21b0;">Int</span><span style="color:#1f1f1f;">?</span></div><div class="cl"><span style="color:#1f1f1f;">    </span><span style="color:#ad3da4;font-weight:bold;">let</span><span style="color:#1f1f1f;"> </span><span style="color:#0b75a8;">firstName</span><span style="color:#1f1f1f;">: </span><span style="color:#4b21b0;">String</span></div><div class="cl"><span style="color:#1f1f1f;">    </span><span style="color:#ad3da4;font-weight:bold;">let</span><span style="color:#1f1f1f;"> </span><span style="color:#0b75a8;">providedDate</span><span style="color:#1f1f1f;">: </span><span style="color:#4b21b0;">Date</span></div><div class="cl"></div><div class="cl"><span style="color:#1f1f1f;">    </span><span style="color:#65778a;">// Provide a hint to the Swift compiler</span></div><div class="cl"><span style="color:#1f1f1f;">    </span><span style="color:#65778a;">// when data is decoded from Supabase or</span></div><div class="cl"><span style="color:#1f1f1f;">    </span><span style="color:#65778a;">// encoded and sent to Supabase</span></div><div class="cl"><span style="color:#1f1f1f;">    </span><span style="color:#65778a;">// What column names in the database table map to</span></div><div class="cl"><span style="color:#1f1f1f;">    </span><span style="color:#65778a;">// what property names here in the structure?</span></div><div class="cl"><span style="color:#1f1f1f;">    </span><span style="color:#ad3da4;font-weight:bold;">enum</span><span style="color:#1f1f1f;"> </span><span style="color:#0b6389;">CodingKeys</span><span style="color:#1f1f1f;">: </span><span style="color:#4b21b0;">String</span><span style="color:#1f1f1f;">, </span><span style="color:#4b21b0;">CodingKey</span><span style="color:#1f1f1f;"> {</span></div><div class="cl"><span style="color:#1f1f1f;">        </span><span style="color:#ad3da4;font-weight:bold;">case</span><span style="color:#1f1f1f;"> </span><span style="color:#0b75a8;">id</span></div><div class="cl"><span style="color:#1f1f1f;">        </span><span style="color:#ad3da4;font-weight:bold;">case</span><span style="color:#1f1f1f;"> </span><span style="color:#0b75a8;">firstName</span><span style="color:#1f1f1f;"> = </span><span style="color:#d12f1b;">&quot;first_name&quot;</span></div><div class="cl"><span style="color:#1f1f1f;">        </span><span style="color:#ad3da4;font-weight:bold;">case</span><span style="color:#1f1f1f;"> </span><span style="color:#0b75a8;">providedDate</span><span style="color:#1f1f1f;"> = </span><span style="color:#d12f1b;">&quot;provided_date&quot;</span></div><div class="cl"><span style="color:#1f1f1f;">    }</span></div><div class="cl"><span style="color:#1f1f1f;">}</span></div><div class="cl"></div><div class="cl"><span style="color:#65778a;">// Sample data for the Person structure (sample data generated by ChatGPT)</span></div><div class="cl"><span style="color:#ad3da4;font-weight:bold;">let</span><span style="color:#1f1f1f;"> </span><span style="color:#0b75a8;">examplePeople</span><span style="color:#1f1f1f;">: [</span><span style="color:#1e5257;">Person</span><span style="color:#1f1f1f;">] = [</span></div><div class="cl"><span style="color:#1f1f1f;">    </span><span style="color:#1e5257;">Person</span><span style="color:#1f1f1f;">(</span><span style="color:#3c7b82;">id</span><span style="color:#1f1f1f;">: </span><span style="color:#272ad8;">1</span><span style="color:#1f1f1f;">, </span><span style="color:#3c7b82;">firstName</span><span style="color:#1f1f1f;">: </span><span style="color:#d12f1b;">&quot;Alice&quot;</span><span style="color:#1f1f1f;">, </span><span style="color:#3c7b82;">providedDate</span><span style="color:#1f1f1f;">: </span><span style="color:#4b21b0;">Date</span><span style="color:#1f1f1f;">()),</span></div><div class="cl"><span style="color:#1f1f1f;">    </span><span style="color:#1e5257;">Person</span><span style="color:#1f1f1f;">(</span><span style="color:#3c7b82;">id</span><span style="color:#1f1f1f;">: </span><span style="color:#272ad8;">2</span><span style="color:#1f1f1f;">, </span><span style="color:#3c7b82;">firstName</span><span style="color:#1f1f1f;">: </span><span style="color:#d12f1b;">&quot;Bob&quot;</span><span style="color:#1f1f1f;">, </span><span style="color:#3c7b82;">providedDate</span><span style="color:#1f1f1f;">: </span><span style="color:#4b21b0;">Date</span><span style="color:#1f1f1f;">()),</span></div><div class="cl"><span style="color:#1f1f1f;">    </span><span style="color:#1e5257;">Person</span><span style="color:#1f1f1f;">(</span><span style="color:#3c7b82;">id</span><span style="color:#1f1f1f;">: </span><span style="color:#272ad8;">3</span><span style="color:#1f1f1f;">, </span><span style="color:#3c7b82;">firstName</span><span style="color:#1f1f1f;">: </span><span style="color:#d12f1b;">&quot;Charlie&quot;</span><span style="color:#1f1f1f;">, </span><span style="color:#3c7b82;">providedDate</span><span style="color:#1f1f1f;">: </span><span style="color:#4b21b0;">Date</span><span style="color:#1f1f1f;">()),</span></div><div class="cl"><span style="color:#1f1f1f;">    </span><span style="color:#1e5257;">Person</span><span style="color:#1f1f1f;">(</span><span style="color:#3c7b82;">id</span><span style="color:#1f1f1f;">: </span><span style="color:#272ad8;">4</span><span style="color:#1f1f1f;">, </span><span style="color:#3c7b82;">firstName</span><span style="color:#1f1f1f;">: </span><span style="color:#d12f1b;">&quot;Diana&quot;</span><span style="color:#1f1f1f;">, </span><span style="color:#3c7b82;">providedDate</span><span style="color:#1f1f1f;">: </span><span style="color:#4b21b0;">Date</span><span style="color:#1f1f1f;">()),</span></div><div class="cl"><span style="color:#1f1f1f;">    </span><span style="color:#1e5257;">Person</span><span style="color:#1f1f1f;">(</span><span style="color:#3c7b82;">id</span><span style="color:#1f1f1f;">: </span><span style="color:#272ad8;">5</span><span style="color:#1f1f1f;">, </span><span style="color:#3c7b82;">firstName</span><span style="color:#1f1f1f;">: </span><span style="color:#d12f1b;">&quot;Evan&quot;</span><span style="color:#1f1f1f;">, </span><span style="color:#3c7b82;">providedDate</span><span style="color:#1f1f1f;">: </span><span style="color:#4b21b0;">Date</span><span style="color:#1f1f1f;">())</span></div><div class="cl"><span style="color:#1f1f1f;">]</span></div><div class="cl"></div></div>
<div style="position:absolute;left:548px;width:100px;text-align:right;top:191.1px;font-family:'Liberation Sans', sans-serif;font-size:32px;line-height:46px;-webkit-text-stroke:0.35px currentColor;transform:scaleX(0.87);transform-origin:100% 0"><div style="height:46px;color:#a6a6a6">1</div><div style="height:46px;color:#a6a6a6">2</div><div style="height:46px;color:#a6a6a6">3</div><div style="height:46px;color:#a6a6a6">4</div><div style="height:46px;color:#a6a6a6">5</div><div style="height:46px;color:#a6a6a6">6</div><div style="height:46px;color:#a6a6a6">7</div><div style="height:46px;color:#a6a6a6">8</div><div style="height:46px;color:#a6a6a6">9</div><div style="height:46px;color:#1f1f1f">10</div><div style="height:46px;color:#a6a6a6">11</div><div style="height:46px;color:#a6a6a6">12</div><div style="height:46px;color:#a6a6a6">13</div><div style="height:46px;color:#a6a6a6">14</div><div style="height:46px;color:#a6a6a6">15</div><div style="height:46px;color:#a6a6a6">16</div><div style="height:46px;color:#a6a6a6">17</div><div style="height:46px;color:#a6a6a6">18</div><div style="height:46px;color:#a6a6a6">19</div><div style="height:46px;color:#a6a6a6">20</div><div style="height:46px;color:#a6a6a6">21</div><div style="height:46px;color:#a6a6a6">22</div><div style="height:46px;color:#a6a6a6">23</div><div style="height:46px;color:#a6a6a6">24</div><div style="height:46px;color:#a6a6a6">25</div><div style="height:46px;color:#a6a6a6">26</div><div style="height:46px;color:#a6a6a6">27</div><div style="height:46px;color:#a6a6a6">28</div><div style="height:46px;color:#a6a6a6">29</div><div style="height:46px;color:#a6a6a6">30</div><div style="height:46px;color:#a6a6a6">31</div><div style="height:46px;color:#a6a6a6">32</div><div style="height:46px;color:#a6a6a6">33</div><div style="height:46px;color:#a6a6a6">34</div><div style="height:46px;color:#a6a6a6">35</div><div style="height:46px;color:#a6a6a6">36</div></div>
<div style="position:absolute;left:3809.8px;top:189.5px;width:30.2px;height:1864.5px;background:#f8f8f8;border-left:1px solid #e4e4e4;box-sizing:border-box"></div>
<div style="position:absolute;left:3818px;top:195.5px;width:16px;height:1375.2px;background:#7f7f7f;border-radius:8px"></div>
<svg style="position:absolute;left:568px;top:2072px" width="32" height="22" viewBox="0 0 32 22"><path d="M3 1.5 L24 1.5 Q26.5 1.5 27.8 3.7 L30.2 8.6 Q30.8 10 30.2 11.4 L27.8 16.3 Q26.5 18.6 24 18.6 L3 18.6 Q1 18.6 1 16.6 L1 3.5 Q1 1.5 3 1.5 Z" fill="#0a7aff"/></svg>
<div style="position:absolute;left:614px;top:2071px;width:2px;height:23px;background:#e2e2e2"></div>
<svg style="position:absolute;left:636px;top:2069px" width="20" height="29" viewBox="0 0 20 29"><rect x="1.5" y="1.5" width="4.5" height="25" rx="1.5" fill="none" stroke="#6e6e6e" stroke-width="2"/><rect x="13" y="1.5" width="4.5" height="25" rx="1.5" fill="none" stroke="#6e6e6e" stroke-width="2"/></svg>
<svg style="position:absolute;left:692px;top:2069px" width="30" height="30" viewBox="0 0 30 30"><g fill="none" stroke="#bdbdbd" stroke-width="1.9" stroke-linejoin="round" stroke-linecap="round"><path d="M1.5 18.1 L13.9 5.7 L26.2 17.7"/><path d="M18.2 17.7 H26.2 V10.5"/></g><rect x="5.5" y="21.6" width="16.7" height="4.8" fill="none" stroke="#bdbdbd" stroke-width="1.9"/></svg>
<svg style="position:absolute;left:756px;top:2069px" width="22" height="30" viewBox="0 0 22 30"><g fill="none" stroke="#bdbdbd" stroke-width="1.9" stroke-linejoin="round" stroke-linecap="round"><path d="M9.9 1 V18.5 M3.1 11.8 L9.9 18.5 L16.8 11.8"/></g><rect x="1.5" y="21.6" width="17.2" height="4.8" fill="none" stroke="#bdbdbd" stroke-width="1.9"/></svg>
<svg style="position:absolute;left:816px;top:2069px" width="22" height="30" viewBox="0 0 22 30"><g fill="none" stroke="#bdbdbd" stroke-width="1.9" stroke-linejoin="round" stroke-linecap="round"><path d="M9.9 1.8 V18.5 M3.3 8.4 L9.9 1.8 L16.8 8.4"/></g><rect x="1.7" y="21.6" width="16.7" height="4.8" fill="none" stroke="#bdbdbd" stroke-width="1.9"/></svg>
<div style="position:absolute;left:855.5px;top:2071px;width:2px;height:23px;background:#e2e2e2"></div>
<svg style="position:absolute;left:875px;top:2068px" width="26" height="30" viewBox="0 0 26 30"><g fill="none" stroke="#6e6e6e" stroke-width="1.9" stroke-linejoin="round"><path d="M11.1 13.9 L23.4 8.3 L23.4 22.6 L11.1 27.9 Z"/><path d="M6.8 25 V10.7 L19.1 5.1"/><path d="M2.3 22.6 V8.3 L15 2.8"/></g></svg>
<svg style="position:absolute;left:933px;top:2069px" width="30" height="28" viewBox="0 0 30 28"><g fill="none" stroke="#6e6e6e" stroke-width="1.9"><circle cx="6.9" cy="5.7" r="4.3"/><circle cx="23.1" cy="13.7" r="4.3"/><circle cx="6.9" cy="22.1" r="4.3"/><path d="M10.8 7.6 L19.2 11.8 M10.8 20.2 L19.2 15.6"/></g></svg>
<svg style="position:absolute;left:995px;top:2069px" width="26" height="28" viewBox="0 0 26 28"><g fill="none" stroke="#6e6e6e" stroke-width="1.9"><rect x="2.5" y="1.8" width="20.7" height="9.5" rx="4.75"/><rect x="2.5" y="16.1" width="20.7" height="10.3" rx="5.1"/></g><circle cx="7.8" cy="7" r="2.6" fill="#6e6e6e"/><circle cx="17.6" cy="20.9" r="2.6" fill="#6e6e6e"/></svg>
<svg style="position:absolute;left:1055px;top:2069px" width="28" height="28" viewBox="0 0 28 28"><path d="M1.4 11.8 L25.3 1.8 L14.9 25.6 L12.5 12.4 Z" fill="none" stroke="#6e6e6e" stroke-width="1.9" stroke-linejoin="round"/></svg>
<div style="position:absolute;left:1098px;top:2071px;width:2px;height:23px;background:#e2e2e2"></div>
<svg style="position:absolute;left:1118px;top:2071px" width="23" height="23" viewBox="0 0 30 30"><rect x="0" y="0" width="30" height="30" rx="6" fill="#7b7b7b"/><g fill="none" stroke="#fff" stroke-width="2.3" stroke-linecap="round"><path d="M17.1 6.9 L10.3 18.1"/><path d="M13.3 6.0 L21.8 21.6"/><path d="M5.9 17.9 H16.4 M20.3 17.9 H24.1"/><path d="M9.3 20.2 L8.0 22.2"/></g></svg>
<div class="t" style="left:1155.5px;top:2071.3px;font-size:23px;line-height:23px;color:#222222;font-weight:normal;font-style:normal;font-family:'Liberation Sans', sans-serif;letter-spacing:-0.3px;">DatesExample</div>
<div class="t" style="left:3577.5px;top:2071.5px;font-size:23px;line-height:23px;color:#7b7b7b;font-weight:normal;font-style:normal;font-family:'Liberation Sans', sans-serif;letter-spacing:0.3px;-webkit-text-stroke:0.5px #7b7b7b">Line: 10  Col: 62</div>
<div style="position:absolute;left:3770px;top:2071px;width:2px;height:23px;background:#e2e2e2"></div>
<svg style="position:absolute;left:3788px;top:2069px" width="28" height="28" viewBox="0 0 28 28"><rect x="1.5" y="1.5" width="24" height="24" rx="4" fill="none" stroke="#6e6e6e" stroke-width="1.9"/><rect x="4" y="16.5" width="19" height="5.5" rx="1.5" fill="#6e6e6e"/></svg>
</div></body></html>
